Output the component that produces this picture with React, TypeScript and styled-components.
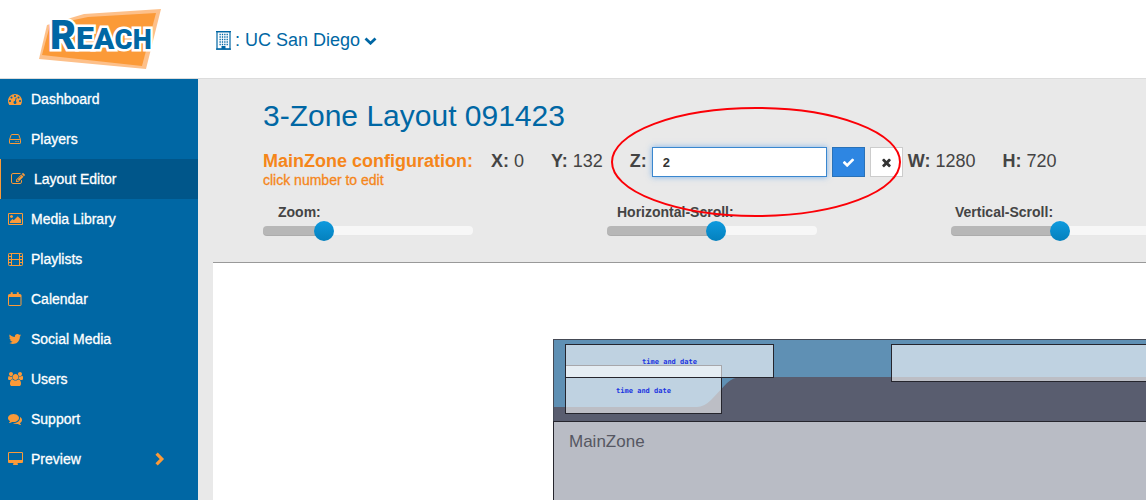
import React, { useState } from "react";
import styled, { createGlobalStyle, css } from "styled-components";

const blue = "#0067a4";
const orange = "#fb9a38";

const GlobalStyle = createGlobalStyle`
  * { box-sizing: border-box; }
  body {
    margin: 0;
    overflow: hidden;
    background: #fff;
    color: #444;
    font-family: "Liberation Sans", Arial, sans-serif;
    font-size: 14px;
  }
`;

const Page = styled.div`
  display: flex;
  flex-direction: column;
  height: 100vh;
`;

const Header = styled.header`
  display: flex;
  align-items: center;
  flex: 0 0 79px;
  border-bottom: 1px solid #dcdcdc;
  background: #fff;
`;

const LogoLink = styled.a`
  flex: 0 0 198px;
  padding-left: 36px;
  svg { display: block; }
`;

const AccountButton = styled.button`
  display: flex;
  align-items: center;
  gap: 4px;
  margin-left: 18px;
  padding: 2px 0 0;
  border: 0;
  background: none;
  color: ${blue};
  font-family: inherit;
  font-size: 18px;
  line-height: 24px;
`;

const Body = styled.div`
  display: flex;
  flex: 1;
  min-height: 0;
`;

const Sidebar = styled.nav`
  flex: 0 0 198px;
  background: ${blue};
`;

const NavLink = styled.a<{ $active?: boolean }>`
  display: flex;
  align-items: center;
  height: 40px;
  padding: 0 33px 0 8px;
  color: #fff;
  font-size: 14px;
  -webkit-text-stroke: 0.3px #fff;
  text-decoration: none;
  ${(p) =>
    p.$active &&
    css`
      border-left: 1px solid ${orange};
      padding-left: 10px;
      background: #00568a;
    `}
`;

const NavIcon = styled.span`
  display: flex;
  flex: 0 0 23px;
  color: ${orange};
`;

const NavText = styled.span`
  flex: 1;
`;

const Main = styled.main`
  display: flex;
  flex-direction: column;
  flex: 1;
  min-width: 0;
  padding-left: 15px;
  overflow: hidden;
  background: #e9e9e9;
`;

const Toolbar = styled.section`
  flex: none;
  height: 184px;
  padding: 19px 0 0 50px;
  border-bottom: 1px solid #999;
`;

const Title = styled.h1`
  margin: 0;
  color: ${blue};
  font-size: 30px;
  font-weight: 400;
  line-height: 36px;
`;

const ConfigRow = styled.div`
  display: flex;
  align-items: flex-start;
  height: 56px;
  margin-top: 13px;
  font-size: 18px;
  line-height: 28px;
  white-space: nowrap;
`;

const ConfigHeading = styled.div`
  flex: none;
  margin-right: 18px;
  color: #f5861a;
`;

const ConfigName = styled.h2`
  margin: 0;
  font-size: 18px;
  line-height: 28px;
`;

const Hint = styled.div`
  font-size: 14px;
  line-height: 10px;
  -webkit-text-stroke: 0.3px #f5861a;
`;

const Field = styled.div`
  flex: none;
  margin-right: 27px;
`;

const Editor = styled.form`
  position: relative;
  display: flex;
  flex: none;
  gap: 5px;
  margin-right: 5px;
`;

const ZInput = styled.input`
  width: 175px;
  height: 30px;
  padding: 0 10px;
  border: 1px solid #3a87cf;
  outline: 0;
  background: #fff;
  box-shadow: 0 0 6px rgba(82, 156, 233, 0.7);
  color: #333;
  font-family: inherit;
  font-size: 13px;
  font-weight: 700;
`;

const IconButton = styled.button<{ $primary?: boolean }>`
  display: flex;
  align-items: center;
  justify-content: center;
  width: 33px;
  height: 30px;
  padding: 0;
  border: 1px solid ${(p) => (p.$primary ? "#2a72b8" : "#ccc")};
  background: ${(p) => (p.$primary ? "#2e86e2" : "#fff")};
  color: ${(p) => (p.$primary ? "#fff" : "#333")};
`;

const Highlight = styled.svg`
  position: absolute;
  top: -41px;
  left: -20px;
  z-index: 2;
  pointer-events: none;
`;

const Sliders = styled.div`
  display: flex;
`;

const SliderGroup = styled.div`
  display: flex;
  flex: 0 0 344px;
  flex-direction: column;
`;

const SliderLabel = styled.label<{ $indent: number }>`
  padding-left: ${(p) => p.$indent}px;
  font-size: 14px;
  font-weight: 700;
  line-height: 18px;
`;

const Range = styled.input<{ $fill: number }>`
  appearance: none;
  width: 210px;
  height: 20px;
  margin: 0;
  background: none;
  &::-webkit-slider-runnable-track {
    height: 10px;
    border-radius: 4px;
    background: linear-gradient(
      to right,
      #b7b7b7 ${(p) => p.$fill}%,
      #f7f7f7 ${(p) => p.$fill}%
    );
    box-shadow: inset 0 -1px 0 rgba(0, 0, 0, 0.06);
  }
  &::-webkit-slider-thumb {
    appearance: none;
    width: 20px;
    height: 20px;
    margin-top: -5px;
    border-radius: 50%;
    background: linear-gradient(#0e9ade, #0480bd);
  }
`;

const Canvas = styled.section`
  flex: 1;
  padding: 76px 0 0 340px;
  overflow: hidden;
  background: #fff;
`;

const Stage = styled.div`
  position: relative;
  width: 900px;
  height: 506px;
  border: 1px solid #454a55;
  background: #595d6f;
`;

const Wave = styled.svg`
  position: absolute;
  top: 0;
  left: 0;
`;

const Zone = styled.div<{ $x: number; $y: number; $w: number; $h: number }>`
  position: absolute;
  left: ${(p) => p.$x}px;
  top: ${(p) => p.$y}px;
  width: ${(p) => p.$w}px;
  height: ${(p) => p.$h}px;
  border: 1px solid #25252d;
  background: rgba(255, 255, 255, 0.6);
`;

const ClockZone = styled(Zone)`
  display: flex;
  align-items: center;
  justify-content: center;
  padding-top: 2px;
  color: #1c35e0;
  font-family: "DejaVu Sans Mono", monospace;
  font-size: 7px;
  font-weight: 700;
`;

const MainZone = styled(Zone)`
  padding: 10px 15px;
  background: #b9bcc5;
  color: #555762;
  font-size: 17px;
  line-height: 20px;
`;

const Glyph = ({ d, w = 1792, size = 14 }: { d: string; w?: number; size?: number }) => (
  <svg width={(w / 1792) * size} height={size} viewBox={`0 0 ${w} 1792`} fill="currentColor" aria-hidden="true">
    <path d={d} />
  </svg>
);

const paths = {
  dashboard:
    "M384 1152q0-53-37.5-90.5t-90.5-37.5-90.5 37.5-37.5 90.5 37.5 90.5 90.5 37.5 90.5-37.5 37.5-90.5zm192-448q0-53-37.5-90.5t-90.5-37.5-90.5 37.5-37.5 90.5 37.5 90.5 90.5 37.5 90.5-37.5 37.5-90.5zm428 481l101-382q6-26-7.5-48.5t-38.5-29.5-48 6.5-30 39.5l-101 382q-60 5-107 43.5t-63 98.5q-20 77 20 146t117 89 146-20 89-117q16-60-6-117t-72-91zm660-33q0-53-37.5-90.5t-90.5-37.5-90.5 37.5-37.5 90.5 37.5 90.5 90.5 37.5 90.5-37.5 37.5-90.5zm-640-640q0-53-37.5-90.5t-90.5-37.5-90.5 37.5-37.5 90.5 37.5 90.5 90.5 37.5 90.5-37.5 37.5-90.5zm448 192q0-53-37.5-90.5t-90.5-37.5-90.5 37.5-37.5 90.5 37.5 90.5 90.5 37.5 90.5-37.5 37.5-90.5zm320 448q0 261-141 483-19 29-54 29h-1402q-35 0-54-29-141-221-141-483 0-182 71-348t191-286 286-191 348-71 348 71 286 191 191 286 71 348z",
  edit: "M888 1184l116-116-152-152-116 116v56h96v96h56zm440-720q-16-16-33 1l-350 350q-17 17-1 33t33-1l350-350q17-17 1-33zm80 594v190q0 119-84.5 203.5t-203.5 84.5h-832q-119 0-203.5-84.5t-84.5-203.5v-832q0-119 84.5-203.5t203.5-84.5h832q63 0 117 25 15 7 18 23 3 17-9 29l-49 49q-14 14-32 8-23-6-45-6h-832q-66 0-113 47t-47 113v832q0 66 47 113t113 47h832q66 0 113-47t47-113v-126q0-13 9-22l64-64q15-15 35-7t20 29zm-96-738l288 288-672 672h-288v-288zm444 132l-92 92-288-288 92-92q28-28 68-28t68 28l152 152q28 28 28 68t-28 68z",
  image:
    "M640 576q0 80-56 136t-136 56-136-56-56-136 56-136 136-56 136 56 56 136zm1024 384v448h-1408v-192l320-320 160 160 512-512zm96-704h-1600q-13 0-22.5 9.5t-9.5 22.5v1216q0 13 9.5 22.5t22.5 9.5h1600q13 0 22.5-9.5t9.5-22.5v-1216q0-13-9.5-22.5t-22.5-9.5zm160 32v1216q0 66-47 113t-113 47h-1600q-66 0-113-47t-47-113v-1216q0-66 47-113t113-47h1600q66 0 113 47t47 113z",
  twitter:
    "M1684 408q-67 98-162 167 1 14 1 42 0 130-38 259.5t-115.5 248.5-184.5 210.5-258 146-323 54.5q-271 0-496-145 35 4 78 4 225 0 401-138-105-2-188-64.5t-114-159.5q33 5 61 5 43 0 85-11-112-23-185.5-111.5t-73.5-205.5v-4q68 38 146 41-66-44-105-115t-39-154q0-88 44-163 121 149 294.5 238.5t371.5 99.5q-8-38-8-74 0-134 94.5-228.5t228.5-94.5q140 0 236 102 109-21 205-78-37 115-142 178 93-10 186-50z",
  users:
    "M593 896q-162 5-265 128h-134q-82 0-138-40.5t-56-118.5q0-353 124-353 6 0 43.5 21t97.5 42.5 119 21.5q67 0 133-23-5 37-5 66 0 159 93 293zm1071 637q0 120-73 189.5t-194 69.5h-874q-121 0-194-69.5t-73-189.5q0-53 3.5-103.5t14-109 26.5-108.5 43-97.5 62-81 85.5-53.5 111.5-20q10 0 43 21.5t73 48 107 48 135 21.5 135-21.5 107-48 73-48 43-21.5q61 0 111.5 20t85.5 53.5 62 81 43 97.5 26.5 108.5 14 109 3.5 103.5zm-1024-1277q0 106-75 181t-181 75-181-75-75-181 75-181 181-75 181 75 75 181zm704 384q0 159-112.5 271.5t-271.5 112.5-271.5-112.5-112.5-271.5 112.5-271.5 271.5-112.5 271.5 112.5 112.5 271.5zm576 225q0 78-56 118.5t-138 40.5h-134q-103-123-265-128 93-134 93-293 0-29-5-66 66 23 133 23 59 0 119-21.5t97.5-42.5 43.5-21q124 0 124 353zm-128-609q0 106-75 181t-181 75-181-75-75-181 75-181 181-75 181 75 75 181z",
  comments:
    "M1408 768q0 139-94 257t-256.5 186.5-353.5 68.5q-86 0-176-16-124 88-278 128-36 9-86 16h-3q-11 0-20.5-8t-11.5-21q-1-3-1-6.5t.5-6.5 2-6l2.5-5 3.5-5.5 4-5 4.5-5 4-4.5q5-6 23-25t26-29.5 22.5-29 25-38.5 20.5-44q-124-72-195-177t-71-224q0-139 94-257t256.5-186.5 353.5-68.5 353.5 68.5 256.5 186.5 94 257zm384 256q0 120-71 224.5t-195 176.5q10 24 20.5 44t25 38.5 22.5 29 26 29.5 23 25q1 1 4 4.5t4.5 5 4 5 3.5 5.5l2.5 5 2 6 .5 6.5-1 6.5q-3 14-13 22t-22 7q-50-7-86-16-154-40-278-128-90 16-176 16-271 0-472-132 58 4 88 4 161 0 309-45t264-129q125-92 192-212t67-254q0-77-23-152 129 71 204 178t75 230z",
  desktop:
    "M1792 992v-832q0-13-9.5-22.5t-22.5-9.5h-1600q-13 0-22.5 9.5t-9.5 22.5v832q0 13 9.5 22.5t22.5 9.5h1600q13 0 22.5-9.5t9.5-22.5zm128-832v1088q0 66-47 113t-113 47h-544q0 37 16 77.5t32 71 16 43.5q0 26-19 45t-45 19h-512q-26 0-45-19t-19-45q0-14 16-44t32-70 16-78h-544q-66 0-113-47t-47-113v-1088q0-66 47-113t113-47h1600q66 0 113 47t47 113z",
  check:
    "M1671 566q0 40-28 68l-724 724-136 136q-28 28-68 28t-68-28l-136-136-362-362q-28-28-28-68t28-68l136-136q28-28 68-28t68 28l294 295 656-657q28-28 68-28t68 28l136 136q28 28 28 68z",
  times:
    "M1490 1322q0 40-28 68l-136 136q-28 28-68 28t-68-28l-294-294-294 294q-28 28-68 28t-68-28l-136-136q-28-28-28-68t28-68l294-294-294-294q-28-28-28-68t28-68l136-136q28-28 68-28t68 28l294 294 294-294q28-28 68-28t68 28l136 136q28 28 28 68t-28 68l-294 294 294 294q28 28 28 68z",
};

const DriveIcon = () => (
  <svg width="14" height="14" viewBox="0 0 14 14" fill="none" stroke="currentColor" aria-hidden="true">
    <path d="M1.5 7.7 3.1 3.1q.2-.6.8-.6h6.2q.6 0 .8.6l1.600 4.600M2.100 7.500h9.800q.6 0 .6.6v2.800q0 .6-.6.6H2.100q-.6 0-.6-.6V8.100q0-.6.6-.6z" />
    <path d="M7.500 9.500h1M9.700 9.500h1" strokeWidth="1.200" />
  </svg>
);

const FilmIcon = () => (
  <svg width="15" height="14" viewBox="0 0 15 14" fill="none" stroke="currentColor" aria-hidden="true">
    <rect x="0.500" y="1.500" width="14" height="12" rx="0.800" />
    <path d="M3.500 1.500v12M11.500 1.500v12M3.500 7.500h8M.5 4.500h3M.5 7.500h3M.5 10.500h3M11.500 4.500h3M11.500 7.500h3M11.500 10.500h3" />
  </svg>
);

const CalendarIcon = () => (
  <svg width="14" height="14" viewBox="0 0 14 14" fill="none" stroke="currentColor" aria-hidden="true">
    <rect x="0.500" y="2.500" width="12.500" height="11" rx="0.600" />
    <path d="M.5 4h12.500" strokeWidth="2" />
    <path d="M3.700 .2v3.600M9.800 .2v3.600" strokeWidth="2" />
  </svg>
);

const BuildingIcon = () => (
  <svg width="15" height="19" viewBox="0 0 15 19" fill="none" stroke="currentColor" aria-hidden="true">
    <rect x="1" y="0.700" width="13" height="17.300" strokeWidth="1.200" />
    <path d="M0 .7h15M0 18.200h15" strokeWidth="1.300" />
    <path
      d="M3.500 3.500h8.500M3.500 6h8.500M3.500 8.500h8.500M3.500 11h8.500M3.500 13.500h8.500"
      strokeWidth="1.300"
      strokeDasharray="1.300 1.050"
    />
    <path d="M5.500 15h4v3h-4z" fill="currentColor" stroke="none" />
  </svg>
);

const ChevronDown = () => (
  <svg width="13" height="9" viewBox="0 0 13 9" fill="none" stroke="currentColor" strokeWidth="2.800" aria-hidden="true">
    <path d="M1.500 2.500 6.500 7.200 11.500 2.500" />
  </svg>
);

const ChevronRight = () => (
  <svg width="10" height="14" viewBox="0 0 10 14" fill="none" stroke={orange} strokeWidth="3.200" aria-hidden="true">
    <path d="M1.600 1.700 6.800 7l-5.200 5.300" />
  </svg>
);

const Logo = () => (
  <svg width="126" height="64" viewBox="0 0 126 64" role="img" aria-label="REACH">
    <path d="M48 7 125 2 110 62 3 52 11 18z" fill="#fdc08a" />
    <path d="M52 10 120 6 106 59 6 48 14 18z" fill="#fb9a38" />
    <text
      x="14"
      y="42"
      fill={blue}
      stroke="#fff"
      strokeWidth="5"
      paintOrder="stroke"
      fontFamily="Roboto, sans-serif"
      fontWeight="900"
    >
      <tspan fontSize="40">R</tspan>
      <tspan fontSize="32">E</tspan>
      <tspan fontSize="30">A</tspan>
      <tspan fontSize="28">C</tspan>
      <tspan fontSize="27">H</tspan>
    </text>
  </svg>
);

const navItems = [
  { label: "Dashboard", icon: <Glyph d={paths.dashboard} /> },
  { label: "Players", icon: <DriveIcon /> },
  { label: "Layout Editor", icon: <Glyph d={paths.edit} />, active: true },
  { label: "Media Library", icon: <Glyph d={paths.image} w={1920} /> },
  { label: "Playlists", icon: <FilmIcon /> },
  { label: "Calendar", icon: <CalendarIcon /> },
  { label: "Social Media", icon: <Glyph d={paths.twitter} /> },
  { label: "Users", icon: <Glyph d={paths.users} w={1920} /> },
  { label: "Support", icon: <Glyph d={paths.comments} /> },
  { label: "Preview", icon: <Glyph d={paths.desktop} w={1920} />, expandable: true },
];

const Slider = ({ id, label, initial, indent }: { id: string; label: string; initial: number; indent: number }) => {
  const [value, setValue] = useState(initial);
  return (
    <SliderGroup>
      <SliderLabel htmlFor={id} $indent={indent}>
        {label}
      </SliderLabel>
      <Range id={id} type="range" value={value} $fill={value} onChange={(e) => setValue(Number(e.target.value))} />
    </SliderGroup>
  );
};

export default function App() {
  const [z, setZ] = useState("2");
  return (
    <Page>
      <GlobalStyle />
      <Header>
        <LogoLink href="#home">
          <Logo />
        </LogoLink>
        <AccountButton type="button">
          <BuildingIcon />
          <span>: UC San Diego</span>
          <ChevronDown />
        </AccountButton>
      </Header>
      <Body>
        <Sidebar>
          {navItems.map((item) => (
            <NavLink key={item.label} href="#nav" $active={item.active}>
              <NavIcon>{item.icon}</NavIcon>
              <NavText>{item.label}</NavText>
              {item.expandable && <ChevronRight />}
            </NavLink>
          ))}
        </Sidebar>
        <Main>
          <Toolbar>
            <Title>3-Zone Layout 091423</Title>
            <ConfigRow>
              <ConfigHeading>
                <ConfigName>MainZone configuration:</ConfigName>
                <Hint>click number to edit</Hint>
              </ConfigHeading>
              <Field>
                <b>X:</b> 0
              </Field>
              <Field>
                <b>Y:</b> 132
              </Field>
              <Editor onSubmit={(e) => e.preventDefault()}>
                <label htmlFor="z-index">
                  <b>Z:</b>
                </label>
                <ZInput id="z-index" value={z} onChange={(e) => setZ(e.target.value)} />
                <IconButton type="submit" $primary aria-label="Save">
                  <Glyph d={paths.check} size={13} />
                </IconButton>
                <IconButton type="button" aria-label="Cancel">
                  <Glyph d={paths.times} size={13} />
                </IconButton>
                <Highlight width="292" height="112" viewBox="0 0 292 112" fill="none" stroke="#fb0007" strokeWidth="2">
                  <ellipse cx="146" cy="56" rx="144" ry="54" />
                </Highlight>
              </Editor>
              <Field>
                <b>W:</b> 1280
              </Field>
              <Field>
                <b>H:</b> 720
              </Field>
            </ConfigRow>
            <Sliders>
              <Slider id="zoom" label="Zoom:" initial={27} indent={15} />
              <Slider id="horizontal" label="Horizontal-Scroll:" initial={52} indent={10} />
              <Slider id="vertical" label="Vertical-Scroll:" initial={52} indent={4} />
            </Sliders>
          </Toolbar>
          <Canvas>
            <Stage>
              <Wave width="898" height="68" viewBox="0 0 898 68">
                <path d="M0 0h898v37H188q-9 0-15 6l-16 17q-7 7-14 7H0z" fill="#5f90b4" />
              </Wave>
              <ClockZone $x={11} $y={25} $w={157} $h={49}>
                time and date
              </ClockZone>
              <ClockZone $x={11} $y={4} $w={209} $h={34}>
                time and date
              </ClockZone>
              <ClockZone $x={337} $y={4} $w={480} $h={38} />
              <MainZone $x={-1} $y={81} $w={900} $h={424}>
                MainZone
              </MainZone>
            </Stage>
          </Canvas>
        </Main>
      </Body>
    </Page>
  );
}
